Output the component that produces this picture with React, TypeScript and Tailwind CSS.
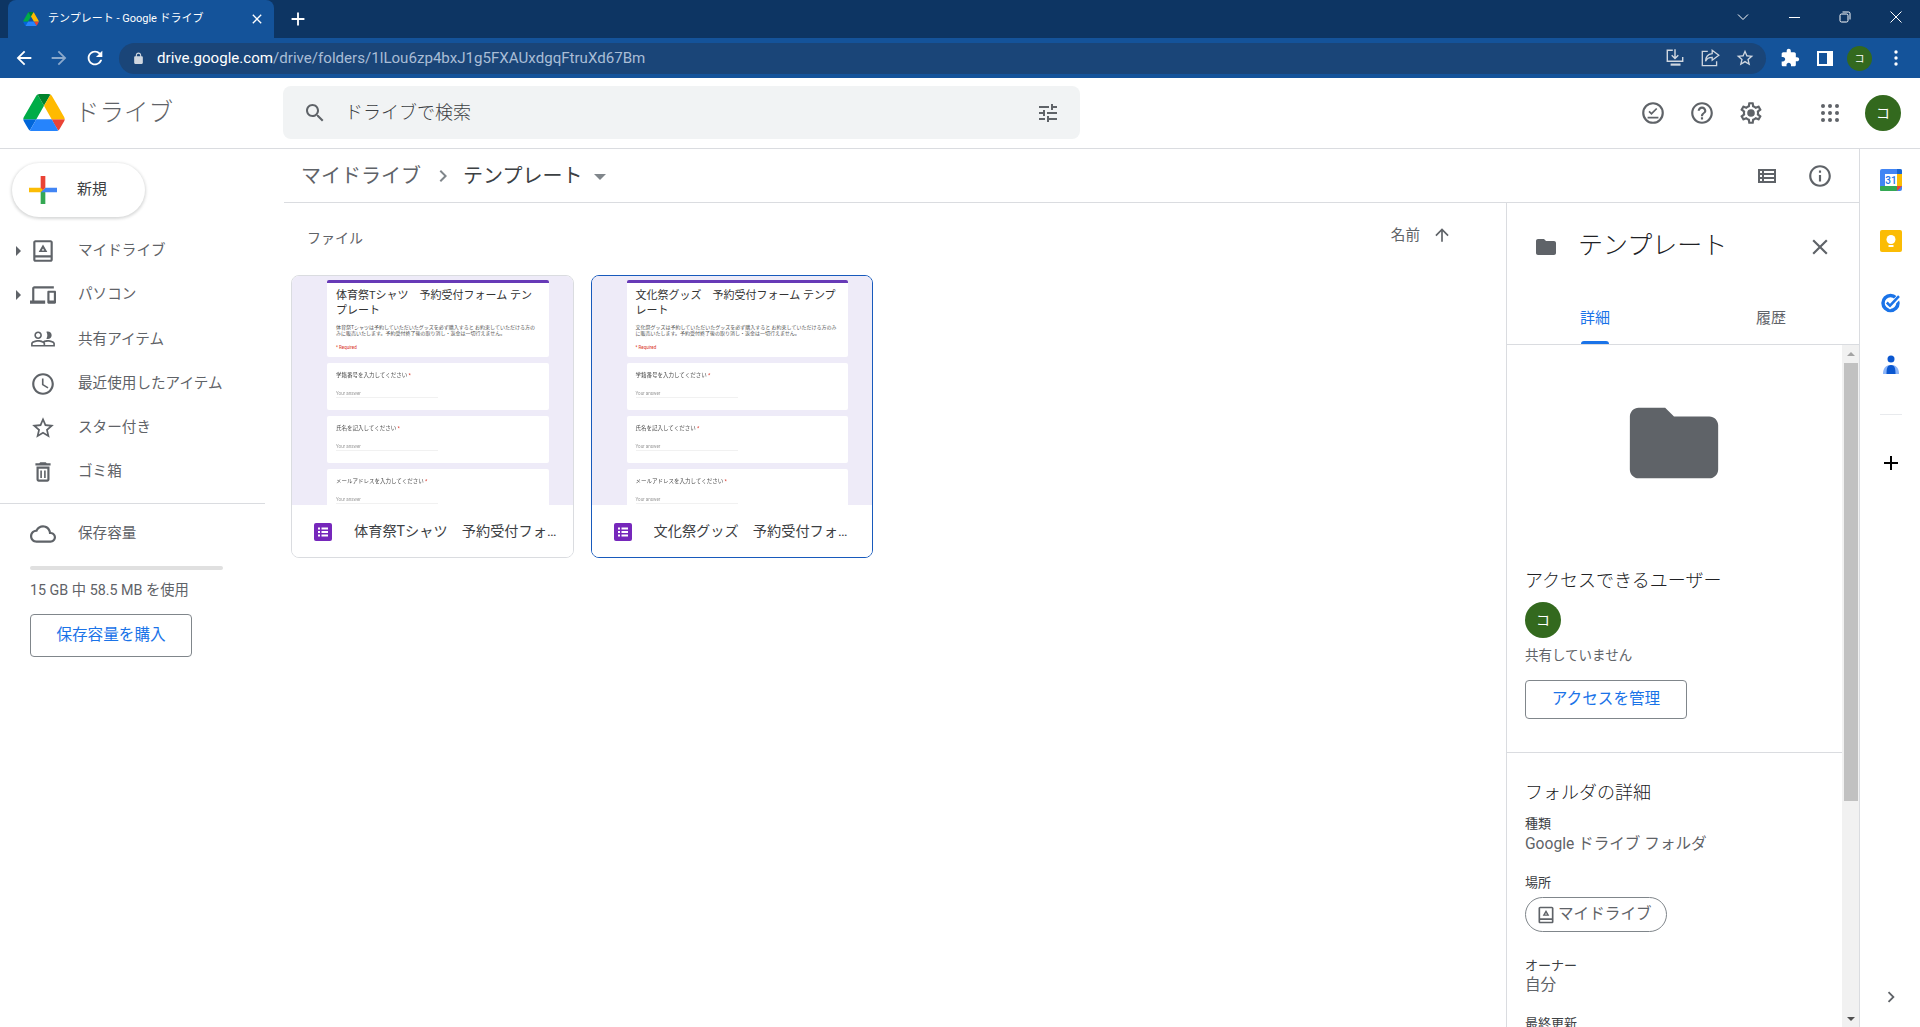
import React from 'react';

const FONT = "font-['Roboto','Noto_Sans_CJK_JP',sans-serif]";

const P = {
  back: 'M20 11H7.83l5.59-5.59L12 4l-8 8 8 8 1.41-1.41L7.83 13H20v-2z',
  forward: 'M4 11h12.17l-5.59-5.59L12 4l8 8-8 8-1.41-1.41L16.17 13H4v-2z',
  refresh:
    'M17.65 6.35C16.2 4.9 14.21 4 12 4c-4.42 0-7.99 3.58-7.99 8s3.57 8 7.99 8c3.73 0 6.84-2.55 7.73-6h-2.08c-.82 2.33-3.04 4-5.65 4-3.31 0-6-2.69-6-6s2.69-6 6-6c1.66 0 3.14.69 4.22 1.78L13 11h7V4l-2.35 2.35z',
  lock: 'M18 8h-1V6c0-2.76-2.24-5-5-5S7 3.24 7 6v2H6c-1.1 0-2 .9-2 2v10c0 1.1.9 2 2 2h12c1.1 0 2-.9 2-2V10c0-1.1-.9-2-2-2zM9 6c0-1.66 1.34-3 3-3s3 1.34 3 3v2H9V6z',
  star: 'M22 9.24l-7.19-.62L12 2 9.19 8.63 2 9.24l5.46 4.73L5.82 21 12 17.27 18.18 21l-1.63-7.03L22 9.24zM12 15.4l-3.76 2.27 1-4.28-3.32-2.88 4.38-.38L12 6.1l1.71 4.04 4.38.38-3.32 2.88 1 4.28L12 15.4z',
  extension:
    'M20.5 11H19V7c0-1.1-.9-2-2-2h-4V3.5C13 2.12 11.88 1 10.5 1S8 2.12 8 3.5V5H4c-1.1 0-1.99.9-1.99 2v3.8H3.5c1.49 0 2.7 1.21 2.7 2.7s-1.21 2.7-2.7 2.7H2V20c0 1.1.9 2 2 2h3.8v-1.5c0-1.49 1.21-2.7 2.7-2.7 1.49 0 2.7 1.21 2.7 2.7V22H17c1.1 0 2-.9 2-2v-4h1.5c1.38 0 2.5-1.12 2.5-2.5S21.88 11 20.5 11z',
  search:
    'M15.5 14h-.79l-.28-.27C15.41 12.59 16 11.11 16 9.5 16 5.91 13.09 3 9.5 3S3 5.91 3 9.5 5.91 16 9.5 16c1.61 0 3.09-.59 4.23-1.57l.27.28v.79l5 4.99L20.49 19l-4.99-5zm-6 0C7.01 14 5 11.99 5 9.5S7.01 5 9.5 5 14 7.01 14 9.5 11.99 14 9.5 14z',
  tune: 'M3 17v2h6v-2H3zM3 5v2h10V5H3zm10 16v-2h8v-2h-8v-2h-2v6h2zM7 9v2H3v2h4v2h2V9H7zm14 4v-2H11v2h10zm-6-4h2V7h4V5h-4V3h-2v6z',
  help: 'M11 18h2v-2h-2v2zm1-16C6.48 2 2 6.48 2 12s4.48 10 10 10 10-4.48 10-10S17.52 2 12 2zm0 18c-4.41 0-8-3.59-8-8s3.59-8 8-8 8 3.59 8 8-3.59 8-8 8zm0-14c-2.21 0-4 1.79-4 4h2c0-1.1.9-2 2-2s2 .9 2 2c0 2-3 1.75-3 5h2c0-2.25 3-2.5 3-5 0-2.21-1.79-4-4-4z',
  settings:
    'M19.43 12.98c.04-.32.07-.64.07-.98 0-.34-.03-.66-.07-.98l2.11-1.65c.19-.15.24-.42.12-.64l-2-3.46c-.09-.16-.26-.25-.44-.25-.06 0-.12.01-.17.03l-2.49 1c-.52-.4-1.08-.73-1.69-.98l-.38-2.65C14.46 2.18 14.25 2 14 2h-4c-.25 0-.46.18-.49.42l-.38 2.65c-.61.25-1.17.59-1.69.98l-2.49-1c-.06-.02-.12-.03-.18-.03-.17 0-.34.09-.43.25l-2 3.46c-.13.22-.07.49.12.64l2.11 1.65c-.04.32-.07.65-.07.98 0 .33.03.66.07.98l-2.11 1.65c-.19.15-.24.42-.12.64l2 3.46c.09.16.26.25.44.25.06 0 .12-.01.17-.03l2.49-1c.52.4 1.08.73 1.69.98l.38 2.65c.03.24.24.42.49.42h4c.25 0 .46-.18.49-.42l.38-2.65c.61-.25 1.17-.59 1.69-.98l2.49 1c.06.02.12.03.18.03.17 0 .34-.09.43-.25l2-3.46c.12-.22.07-.49-.12-.64l-2.11-1.65zm-1.98-1.71c.04.31.05.52.05.73 0 .21-.02.43-.05.73l-.14 1.13.89.7 1.08.84-.7 1.21-1.27-.51-1.04-.42-.9.68c-.43.32-.84.56-1.25.73l-1.06.43-.16 1.13-.2 1.35h-1.4l-.19-1.35-.16-1.13-1.06-.43c-.43-.18-.83-.41-1.23-.71l-.91-.7-1.06.43-1.27.51-.7-1.21 1.08-.84.89-.7-.14-1.13c-.03-.31-.05-.54-.05-.74s.02-.43.05-.73l.14-1.13-.89-.7-1.08-.84.7-1.21 1.27.51 1.04.42.9-.68c.43-.32.84-.56 1.25-.73l1.06-.43.16-1.13.2-1.35h1.39l.19 1.35.16 1.13 1.06.43c.43.18.83.41 1.23.71l.91.7 1.06-.43 1.27-.51.7 1.21-1.07.85-.89.7.14 1.13zM12 8.5a3.5 3.5 0 1 0 0 7 3.5 3.5 0 0 0 0-7z',
  info: 'M11 7h2v2h-2zm0 4h2v6h-2zm1-9C6.48 2 2 6.48 2 12s4.48 10 10 10 10-4.48 10-10S17.52 2 12 2zm0 18c-4.41 0-8-3.59-8-8s3.59-8 8-8 8 3.59 8 8-3.59 8-8 8z',
  list: 'M3 5v14h18V5H3zm4 2v2H5V7h2zm-2 6v-2h2v2H5zm0 2h2v2H5v-2zm14 2H9v-2h10v2zm0-4H9v-2h10v2zm0-4H9V7h10v2z',
  folder: 'M10 4H4c-1.1 0-1.99.9-1.99 2L2 18c0 1.1.9 2 2 2h16c1.1 0 2-.9 2-2V8c0-1.1-.9-2-2-2h-8l-2-2z',
  close:
    'M19 6.41L17.59 5 12 10.59 6.41 5 5 6.41 10.59 12 5 17.59 6.41 19 12 13.41 17.59 19 19 17.59 13.41 12z',
  people:
    'M16.5 13c-1.2 0-3.07.34-4.5 1-1.43-.67-3.3-1-4.5-1C5.33 13 1 14.08 1 16.25V19h22v-2.75c0-2.17-4.33-3.25-6.5-3.25zm-4 4.5h-10v-1.25c0-.54 2.56-1.75 5-1.75s5 1.21 5 1.75v1.25zm9 0H14v-1.25c0-.46-.2-.86-.52-1.22.88-.3 1.96-.53 3.02-.53 2.44 0 5 1.21 5 1.75v1.25zM7.5 12c1.93 0 3.5-1.57 3.5-3.5S9.43 5 7.5 5 4 6.57 4 8.5 5.57 12 7.5 12zm0-5.5c1.1 0 2 .9 2 2s-.9 2-2 2-2-.9-2-2 .9-2 2-2zm9 5.5c1.93 0 3.5-1.57 3.5-3.5S18.43 5 16.5 5c-.5 0-1 .1-1.4.3.6 1 .9 2 .9 3.2s-.3 2.2-.9 3.2c.4.2.9.3 1.4.3z',
  clock:
    'M11.99 2C6.47 2 2 6.48 2 12s4.47 10 9.99 10C17.52 22 22 17.52 22 12S17.52 2 11.99 2zM12 20c-4.42 0-8-3.58-8-8s3.58-8 8-8 8 3.58 8 8-3.58 8-8 8zm.5-13H11v6l5.25 3.15.75-1.23-4.5-2.67z',
  trash:
    'M6 19c0 1.1.9 2 2 2h8c1.1 0 2-.9 2-2V7H6v12zM8 9h8v10H8V9zm1.5 1.5h1.5v7H9.5zm3.5 0h1.5v7H13zM15.5 4l-1-1h-5l-1 1H5v2h14V4z',
  cloud:
    'M19.35 10.04C18.67 6.59 15.64 4 12 4 9.11 4 6.6 5.64 5.35 8.04 2.34 8.36 0 10.91 0 14c0 3.31 2.69 6 6 6h13c2.76 0 5-2.24 5-5 0-2.64-2.05-4.78-4.65-4.96zM19 18H6c-2.21 0-4-1.79-4-4s1.79-4 4-4h.71C7.37 7.69 9.48 6 12 6c3.04 0 5.5 2.46 5.5 5.5v.5H19c1.66 0 3 1.34 3 3s-1.34 3-3 3z',
  up: 'M4 12l1.41 1.41L11 7.83V20h2V7.83l5.58 5.59L20 12l-8-8-8 8z',
  chevron: 'M10 6L8.59 7.41 13.17 12l-4.58 4.59L10 18l6-6z',
  add: 'M19 13h-6v6h-2v-6H5v-2h6V5h2v6h6v2z',
  myDrive:
    'M19 2H5c-1.1 0-2 .9-2 2v16c0 1.1.9 2 2 2h14c1.1 0 2-.9 2-2V4c0-1.1-.9-2-2-2zm0 2v12H5V4h14zM5 20v-2h14v2H5zm7-14L8 13h8l-4-7zm0 3.6l1.2 1.9h-2.4L12 9.6z',
  computer:
    'M4 6h18V4H4c-1.1 0-2 .9-2 2v11H0v3h14v-3H4V6zm19 2h-6c-.55 0-1 .45-1 1v10c0 .55.45 1 1 1h6c.55 0 1-.45 1-1V9c0-.55-.45-1-1-1zm-1 9h-4v-7h4v7z',
  taskCheck:
    'M12 2a10 10 0 1 0 0 20 10 10 0 0 0 0-20zm0 18a8 8 0 1 1 0-16 8 8 0 0 1 0 16zM7 15.500h10v1.500H7zM10.600 13.800L7.800 11l1.100-1.100 1.700 1.700 4.300-4.300 1.100 1.100z',
};

function Ic({ d, className }: { d: string; className?: string }) {
  return (
    <svg viewBox="0 0 24 24" className={className} fill="currentColor">
      <path d={d} />
    </svg>
  );
}

function DriveLogo({ className }: { className?: string }) {
  return (
    <svg viewBox="0 0 87.3 78" className={className}>
      <path d="m6.6 66.85 3.85 6.65c.8 1.4 1.95 2.5 3.3 3.3l13.75-23.8h-27.5c0 1.55.4 3.1 1.2 4.5z" fill="#0066da" />
      <path d="m43.65 25-13.75-23.8c-1.35.8-2.5 1.9-3.3 3.3l-25.4 44a9.06 9.06 0 0 0 -1.2 4.5h27.5z" fill="#00ac47" />
      <path d="m73.55 76.8c1.35-.8 2.5-1.9 3.3-3.3l1.6-2.75 7.65-13.25c.8-1.4 1.2-2.95 1.2-4.5h-27.502l5.852 11.5z" fill="#ea4335" />
      <path d="m43.65 25 13.75-23.8c-1.35-.8-2.9-1.2-4.5-1.2h-18.5c-1.6 0-3.15.45-4.5 1.2z" fill="#00832d" />
      <path d="m59.8 53h-32.3l-13.75 23.8c1.35.8 2.9 1.2 4.5 1.2h50.8c1.6 0 3.15-.45 4.5-1.2z" fill="#2684fc" />
      <path d="m73.4 26.5-12.7-22c-.8-1.4-1.95-2.5-3.3-3.3l-13.75 23.8 16.15 28h27.45c0-1.55-.4-3.1-1.2-4.5z" fill="#ffba00" />
    </svg>
  );
}

function FormsIcon() {
  return (
    <svg viewBox="0 0 18 18" className="h-[18px] w-[18px] shrink-0">
      <rect width="18" height="18" rx="2" fill="#7627bb" />
      <path d="M4 4.5h2v2H4zM7.5 4.5H14v2H7.5zM4 8h2v2H4zM7.5 8H14v2H7.5zM4 11.5h2v2H4zM7.5 11.5H14v2H7.5z" fill="#fff" />
    </svg>
  );
}

function Avatar({ className }: { className: string }) {
  return (
    <div className={`flex items-center justify-center rounded-full bg-[#33691e] text-white ${className}`}>コ</div>
  );
}

function ChromeBar() {
  return (
    <div className="bg-[#0d3563]">
      <div className="flex h-[38px] items-end">
        <div className="ml-[8px] flex h-[38px] w-[266px] items-center rounded-t-lg bg-[#14539a] pl-[15px] text-[11px] text-white">
          <DriveLogo className="h-[14px] w-[16px]" />
          <span className="ml-[9px]">テンプレート - Google ドライブ</span>
          <Ic d={P.close} className="ml-auto mr-[9px] h-4 w-4" />
        </div>
        <Ic d={P.add} className="ml-[13px] mb-[8px] h-[22px] w-[22px] text-white" />
        <div className="ml-auto mb-[15px] flex items-center pr-[18px] text-white">
          <svg viewBox="0 0 12 12" className="mr-[40px] h-3 w-3" fill="none" stroke="currentColor">
            <path d="M1 3.5l5 5 5-5" />
          </svg>
          <div className="mr-[39px] h-px w-[11px] bg-white" />
          <svg viewBox="0 0 12 12" className="mr-[39px] h-3 w-3" fill="none" stroke="currentColor">
            <rect x="1" y="3" width="8" height="8" rx="1.5" />
            <path d="M3.5 1h6a1.500 1.500 0 0 1 1.500 1.500v6" />
          </svg>
          <svg viewBox="0 0 12 12" className="h-3 w-3" fill="none" stroke="currentColor">
            <path d="M.5.5l11 11M11.5.5l-11 11" />
          </svg>
        </div>
      </div>
      <div className="flex h-[40px] items-center bg-[#14539a] text-white">
        <Ic d={P.back} className="ml-[13px] h-[22px] w-[22px]" />
        <Ic d={P.forward} className="ml-[13px] h-[22px] w-[22px] text-[#8ba9cc]" />
        <Ic d={P.refresh} className="ml-[14px] h-[22px] w-[22px]" />
        <div className="ml-[13px] flex h-[31px] w-[1647px] items-center rounded-full bg-[#1a4578] pl-[13px]">
          <Ic d={P.lock} className="h-[13px] w-[13px] text-[#d0d7e0]" />
          <span className="ml-[12px] text-[15.1px] text-white">
            drive.google.com<span className="text-[#a9bdd6]">/drive/folders/1lLou6zp4bxJ1g5FXAUxdgqFtruXd67Bm</span>
          </span>
          <svg viewBox="0 0 20 20" className="ml-auto h-[22px] w-[22px] text-[#d0d7e0]" fill="none" stroke="currentColor" strokeWidth="1.3">
            <path d="M8 3H3v10h14V9M10 2v8M7 7.5l3 3 3-3" />
            <path d="M6 16h9" strokeWidth="2" />
          </svg>
          <svg viewBox="0 0 20 20" className="ml-[13px] h-[22px] w-[22px] text-[#d0d7e0]" fill="none" stroke="currentColor" strokeWidth="1.2">
            <path d="M8 4H3v13h13v-4M12 3l6 4.5-6 4.5V9.5c-3 0-5 1-6 3.5 0-4 2-6.500 6-7z" />
          </svg>
          <Ic d={P.star} className="ml-[14px] mr-[11px] h-[20px] w-[20px] text-[#d0d7e0]" />
        </div>
        <Ic d={P.extension} className="ml-[14px] h-[20px] w-[20px]" />
        <div className="ml-[17px] flex h-[15px] w-[16px] justify-end border-2 border-white">
          <div className="h-full w-[4px] bg-white" />
        </div>
        <Avatar className="ml-[14px] h-[25px] w-[25px] text-[10px]" />
        <svg viewBox="0 0 4 16" className="ml-[22px] h-[16px] w-[4px]" fill="currentColor">
          <circle cx="2" cy="2" r="1.7" />
          <circle cx="2" cy="8" r="1.7" />
          <circle cx="2" cy="14" r="1.7" />
        </svg>
      </div>
    </div>
  );
}

function TopBar() {
  return (
    <header className="flex h-[71px] shrink-0 items-center border-b border-[#dadce0] bg-white text-[#5f6368]">
      <DriveLogo className="ml-[23px] mb-[2px] h-[37px] w-[42px]" />
      <span className="ml-[10px] w-[208px] text-[24.5px] font-light">ドライブ</span>
      <div className="mb-[1px] flex h-[53px] w-[797px] items-center rounded-lg bg-[#f1f3f4]">
        <Ic d={P.search} className="ml-[20px] h-6 w-6" />
        <span className="ml-[18px] text-lg font-light text-[#3c4043]">ドライブで検索</span>
        <Ic d={P.tune} className="ml-auto mr-[20px] h-6 w-6" />
      </div>
      <Ic d={P.taskCheck} className="ml-[560px] h-[26px] w-[26px]" />
      <Ic d={P.help} className="ml-[23px] h-[26px] w-[26px]" />
      <Ic d={P.settings} className="ml-[23px] h-[26px] w-[26px]" />
      <svg viewBox="0 0 18 18" className="ml-[57px] h-[18px] w-[18px]" fill="currentColor">
        {[2, 9, 16].flatMap((y) =>
          [2, 9, 16].map((x) => <circle key={`${x}-${y}`} cx={x} cy={y} r="2" />),
        )}
      </svg>
      <Avatar className="ml-[26px] h-9 w-9 text-sm" />
    </header>
  );
}

const NAV = [
  { d: P.myDrive, label: 'マイドライブ', arrow: true },
  { d: P.computer, label: 'パソコン', arrow: true },
  { d: P.people, label: '共有アイテム', arrow: false },
  { d: P.clock, label: '最近使用したアイテム', arrow: false },
  { d: P.star, label: 'スター付き', arrow: false },
  { d: P.trash, label: 'ゴミ箱', arrow: false },
];

function Sidebar() {
  return (
    <aside className="flex w-[265px] shrink-0 flex-col bg-white text-[#5f6368]">
      <div className="ml-[12px] mt-[14px] flex h-[54px] w-[133px] items-center rounded-full bg-white pl-[10px] shadow-[0_1px_3px_1px_rgba(60,64,67,0.2)]">
        <svg viewBox="0 0 36 36" className="h-[42px] w-[42px]">
          <path fill="#34a853" d="M16 16v14h4V20z" />
          <path fill="#4285f4" d="M30 16H20l-4 4h14z" />
          <path fill="#fbbc05" d="M6 16v4h10l4-4z" />
          <path fill="#ea4335" d="M20 16V6h-4v10l2 2z" />
        </svg>
        <span className="ml-[13px] mb-[2px] text-[15px] text-[#3c4043]">新規</span>
      </div>
      <nav className="mt-[12px] flex flex-col border-b border-[#dadce0] pb-[9px]">
        {NAV.map((item) => (
          <div key={item.label} className="flex h-[44.2px] items-center">
            <div className="ml-[16px] h-0 w-[6px]">
              {item.arrow && <div className="-mt-[5px] h-0 w-0 border-y-[5px] border-l-[5px] border-y-transparent border-l-[#5f6368]" />}
            </div>
            <Ic d={item.d} className="ml-[8px] h-[26px] w-[26px]" />
            <span className="ml-[22px] text-[14.6px]">{item.label}</span>
          </div>
        ))}
      </nav>
      <div className="ml-[30px] mt-[17px] flex items-center">
        <Ic d={P.cloud} className="h-[26px] w-[26px]" />
        <span className="ml-[22px] text-[14.6px]">保存容量</span>
      </div>
      <div className="ml-[30px] mt-[19px] h-1 w-[193px] rounded-full bg-[#e0e0e0]" />
      <div className="ml-[30px] mt-[10px] text-[14.3px]">15 GB 中 58.5 MB を使用</div>
      <div className="ml-[30px] mt-[12px] flex h-[43px] w-[162px] items-center justify-center rounded border border-[#80868b] pt-[1px] text-[15.6px] text-[#1a73e8]">
        保存容量を購入
      </div>
    </aside>
  );
}

function FormLine({ label }: { label: string }) {
  return (
    <div className="mt-[6px] h-[47px] rounded-[2px] bg-white px-[9px] pt-[9px] text-[5.500px] leading-[6px] text-[#4a4a4a]">
      <div>
        {label}
        <span className="text-[#d93025]"> *</span>
      </div>
      <div className="mt-[13px] w-[102px] border-b border-[#f1f1f1] pb-[1px] text-[4.500px] leading-[5px] text-[#9a9a9a]">Your answer</div>
    </div>
  );
}

function FileCard({ title, heading, desc, name, selected }: { title: string; heading: string; desc: string; name: string; selected?: boolean }) {
  return (
    <div className={`flex h-[283px] w-[282.5px] flex-col overflow-hidden rounded-lg border ${selected ? 'border-[#185abc]' : 'border-[#dadce0]'}`}>
      <div className="h-[229px] overflow-hidden bg-[#eeebf8] pl-[35px] pr-[24px] pt-[4px]">
        <div className="blur-[0.45px]">
          <div className="h-[77px] overflow-hidden rounded-[2px] border-t-[3px] border-[#673ab7] bg-white px-[9px] pt-[5px]">
            <div className="text-[11px] leading-[15px] text-[#333]">{title}</div>
            <div className="mt-[6px] text-[5px] leading-[6px] text-[#555]">{desc}</div>
            <div className="mt-[9px] text-[4.500px] leading-[5px] text-[#d93025]">* Required</div>
          </div>
          <FormLine label={heading} />
          <FormLine label="氏名を記入してください" />
          <FormLine label="メールアドレスを入力してください" />
        </div>
      </div>
      <div className="flex h-[52px] items-center bg-white pl-[22px] pr-[12px] pt-[1px]">
        <FormsIcon />
        <span className="ml-[22px] min-w-0 truncate text-[14.2px] text-[#3c4043]">{name}</span>
      </div>
    </div>
  );
}

function MainArea() {
  return (
    <main className="flex min-w-0 flex-1 flex-col text-[#5f6368]">
      <div className="ml-[19px] flex h-[54px] shrink-0 items-center border-b border-[#dadce0] pl-[17px]">
        <span className="text-xl text-[#5f6368]">マイドライブ</span>
        <Ic d={P.chevron} className="ml-[10px] h-6 w-6 text-[#80868b]" />
        <span className="ml-[8px] text-xl text-[#3c4043]">テンプレート</span>
        <div className="ml-[12px] mt-[2px] h-0 w-0 border-x-[6px] border-t-[6px] border-x-transparent border-t-[#80868b]" />
        <Ic d={P.list} className="ml-auto h-6 w-6" />
        <Ic d={P.info} className="ml-[28px] mr-[26px] h-[26px] w-[26px]" />
      </div>
      <div className="flex min-h-0 flex-1">
        <section className="w-[1241px] pl-[26px]">
          <div className="flex h-[72px] items-center pb-[2px] text-sm">
            <span className="ml-[16px]">ファイル</span>
            <span className="ml-auto -mt-[6px] text-[14.6px]">名前</span>
            <Ic d={P.up} className="ml-[12px] mr-[54px] -mt-[6px] h-[20px] w-[20px]" />
          </div>
          <div className="flex gap-[17px]">
            <FileCard
              title="体育祭Tシャツ　予約受付フォーム テンプレート"
              heading="学籍番号を入力してください"
              desc="体育祭Tシャツは予約していただいたグッズを必ず購入すると お約束していただける方のみに販売いたします。予約受付終了後の取り消し・返金は一切行えません。"
              name="体育祭Tシャツ　予約受付フォーム テンプレート"
            />
            <FileCard
              selected
              title="文化祭グッズ　予約受付フォーム テンプレート"
              heading="学籍番号を入力してください"
              desc="文化祭グッズは予約していただいたグッズを必ず購入すると お約束していただける方のみに販売いたします。予約受付終了後の取り消し・返金は一切行えません。"
              name="文化祭グッズ　予約受付フォーム テンプレート"
            />
          </div>
        </section>
        <DetailPanel />
      </div>
    </main>
  );
}

function DetailPanel() {
  return (
    <aside className="flex min-h-0 w-[353px] shrink-0 flex-col border-l border-[#dadce0]">
      <div className="flex h-[87px] shrink-0 items-center pl-[27px]">
        <Ic d={P.folder} className="h-6 w-6" />
        <span className="ml-[20px] mb-[2px] text-[25px] font-light text-[#202124]">テンプレート</span>
        <Ic d={P.close} className="ml-auto mr-[26px] h-[26px] w-[26px]" />
      </div>
      <div className="relative flex h-[55px] shrink-0 border-b border-[#dadce0] text-[15px]">
        <div className="ml-[73px] mt-[17px] text-[#1a73e8]">詳細</div>
        <div className="ml-[146px] mt-[17px]">履歴</div>
        <div className="absolute bottom-0 left-[74px] h-[3px] w-[28px] rounded-t-sm bg-[#1a73e8]" />
      </div>
      <div className="flex min-h-0 flex-1">
        <div className="min-w-0 flex-1 overflow-hidden">
          <div className="flex h-[224px] items-center justify-center pb-[29px]">
            <Ic d={P.folder} className="ml-[-1px] h-[106px] w-[106px]" />
          </div>
          <div className="h-[184px] border-b border-[#dadce0] pl-[18px]">
            <div className="text-[18px] font-light leading-[24px] text-[#202124]">アクセスできるユーザー</div>
            <Avatar className="mt-[9px] h-9 w-9 text-sm" />
            <div className="mt-[7px] text-[13.500px] leading-[20px]">共有していません</div>
            <div className="mt-[15px] flex h-[39px] w-[162px] items-center justify-center rounded border border-[#80868b] text-[15.6px] text-[#1a73e8]">
              アクセスを管理
            </div>
          </div>
          <div className="pl-[18px] pt-[28px]">
            <div className="text-lg font-light leading-6 text-[#202124]">フォルダの詳細</div>
            <div className="mt-[10px] text-[13px] leading-[18px] text-[#3c4043]">種類</div>
            <div className="mt-[1px] text-[15.6px] leading-5">Google ドライブ フォルダ</div>
            <div className="mt-[20px] text-[13px] leading-[18px] text-[#3c4043]">場所</div>
            <div className="mt-[5px] flex h-[35px] w-[142px] items-center rounded-full border border-[#80868b] pl-[10px] text-[15.6px]">
              <Ic d={P.myDrive} className="h-[20px] w-[20px]" />
              <span className="ml-[2px]">マイドライブ</span>
            </div>
            <div className="mt-[25px] text-[13px] leading-[18px] text-[#3c4043]">オーナー</div>
            <div className="text-[15.6px] leading-5">自分</div>
            <div className="mt-[20px] text-[13px] leading-[18px] text-[#3c4043]">最終更新</div>
          </div>
        </div>
        <div className="flex w-[17px] shrink-0 flex-col bg-[#f1f1f1]">
          <div className="flex h-[18px] items-center justify-center">
            <div className="h-0 w-0 border-x-[4px] border-b-[4px] border-x-transparent border-b-[#a3a3a3]" />
          </div>
          <div className="ml-[2px] h-[438px] w-[14px] bg-[#c1c1c1]" />
          <div className="mt-auto flex h-[17px] items-center justify-center">
            <div className="h-0 w-0 border-x-[4px] border-t-[4px] border-x-transparent border-t-[#505050]" />
          </div>
        </div>
      </div>
    </aside>
  );
}

function RightRail() {
  return (
    <aside className="flex w-[61px] shrink-0 flex-col items-center border-l border-[#dadce0] bg-white pl-[2px] pt-[20px]">
      <svg viewBox="0 0 22 22" className="h-[22px] w-[22px]">
        <rect width="22" height="22" rx="2" fill="#4285f4" />
        <rect x="5" y="5" width="12" height="12" fill="#fff" />
        <rect x="17" y="5" width="5" height="12" fill="#fbbc04" />
        <rect y="17" width="17" height="5" rx="1" fill="#34a853" />
        <path d="M17 0h3a2 2 0 0 1 2 2v3h-5z" fill="#1967d2" />
        <path d="M17 17h5l-5 5z" fill="#ea4335" />
        <text x="11" y="14.500" textAnchor="middle" fontSize="10" fontFamily="Roboto, sans-serif" fontWeight="500" fill="#1a73e8">31</text>
      </svg>
      <svg viewBox="0 0 22 22" className="mt-[39px] h-[22px] w-[22px]">
        <rect width="22" height="22" rx="2" fill="#fbbc04" />
        <circle cx="11" cy="9.500" r="4.500" fill="#fff" />
        <rect x="8.500" y="15" width="5" height="2" fill="#fff" />
      </svg>
      <svg viewBox="0 0 22 22" className="mt-[39px] h-[22px] w-[22px]" fill="none">
        <circle cx="10.500" cy="12" r="7.500" stroke="#1a73e8" strokeWidth="3.500" />
        <path d="M6.500 11.500l3.500 3.500 10-10" stroke="#fff" strokeWidth="5" />
        <path d="M6.800 11.500l3.200 3.200 9-9.500" stroke="#1a73e8" strokeWidth="2.500" />
      </svg>
      <svg viewBox="0 0 22 22" className="mt-[41px] h-[22px] w-[22px]">
        <circle cx="11" cy="5" r="3.500" fill="#0b57d0" />
        <path d="M3 20c0-6 3-9 8-9s8 3 8 9z" fill="#8ab4f8" />
        <path d="M6.500 20c0-6 1-9 4.500-9s4.500 3 4.500 9z" fill="#0b57d0" />
      </svg>
      <div className="mt-[38px] h-px w-[22px] bg-[#e8eaed]" />
      <Ic d={P.add} className="mt-[36px] h-6 w-6 text-black" />
      <Ic d={P.chevron} className="mb-[19px] mt-auto h-[22px] w-[22px] text-[#5f6368]" />
    </aside>
  );
}

export default function App() {
  return (
    <div className={`flex h-screen w-full flex-col overflow-hidden bg-white ${FONT}`}>
      <ChromeBar />
      <TopBar />
      <div className="flex min-h-0 flex-1">
        <Sidebar />
        <MainArea />
        <RightRail />
      </div>
    </div>
  );
}
